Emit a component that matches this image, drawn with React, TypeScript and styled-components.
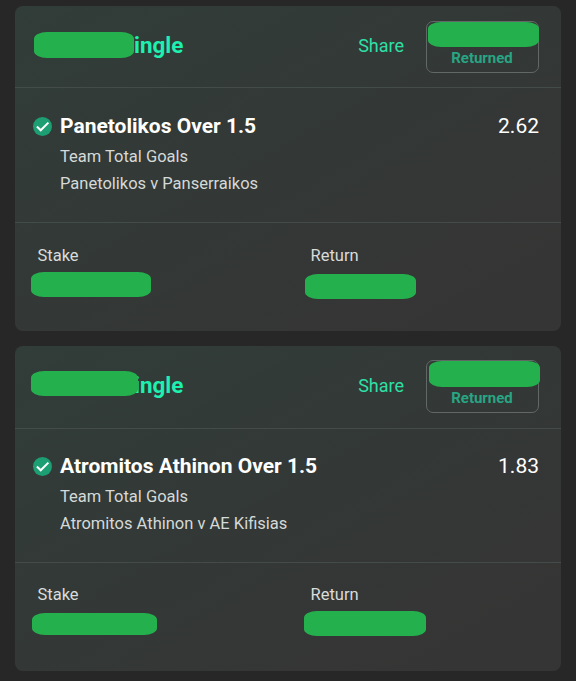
import React from "react";
import styled, { createGlobalStyle } from "styled-components";

const GlobalStyle = createGlobalStyle`
  * { box-sizing: border-box; }
  body {
    margin: 0;
    background: #282727;
    font-family: Roboto, "Liberation Sans", sans-serif;
    color: #fff;
  }
`;

const Page = styled.main`
  display: flex;
  flex-direction: column;
  gap: 15px;
  height: 681px;
  padding: 6px 15px 10px;
  overflow: hidden;
`;

const Card = styled.article`
  width: 546px;
  height: 325px;
  display: flex;
  flex-direction: column;
  border-radius: 8px;
  background: linear-gradient(150deg, #313d39 0%, #333836 50%, #363535 90%);
`;

const Header = styled.header<{ $height: number }>`
  display: flex;
  align-items: flex-start;
  flex: none;
  height: ${(p) => p.$height}px;
  padding: 0 22px 0 19px;
  border-bottom: 1px solid #434c48;
`;

const TitleWrap = styled.div`
  position: relative;
  flex: 1;
  height: 28px;
  margin-top: 25px;
  padding-left: 100px;
`;

const Title = styled.h2`
  margin: 0;
  font-size: 22.4px;
  line-height: 28px;
  font-weight: 700;
  color: #1ef0b0;
`;

const Share = styled.button`
  border: 0;
  padding: 0;
  margin: 28px 22px 0 0;
  background: none;
  font: 400 18px/24px Roboto, sans-serif;
  color: #2ee0a5;
`;

const ReturnedBox = styled.div<{ $top: number }>`
  position: relative;
  display: flex;
  align-items: flex-end;
  justify-content: center;
  width: 113px;
  height: ${(p) => 67 - p.$top}px;
  margin-top: ${(p) => p.$top}px;
  padding: 0 1px 5px 0;
  border: 1px solid #626866;
  border-radius: 7px;
  font-size: 15px;
  line-height: 18px;
  font-weight: 700;
  color: #28a582;
`;

const Selection = styled.section<{ $height: number }>`
  display: grid;
  grid-template-columns: 27px 1fr auto;
  align-content: end;
  flex: none;
  height: ${(p) => p.$height}px;
  padding: 0 22px 25px 18px;
  border-bottom: 1px solid #434c48;
`;

const StatusIcon = styled.svg`
  width: 19px;
  height: 19px;
  margin-top: 5px;
`;

const Pick = styled.h3`
  margin: 0;
  font-size: 21px;
  line-height: 28px;
  font-weight: 700;
`;

const Odds = styled.span`
  font-size: 21px;
  line-height: 28px;
`;

const Detail = styled.p`
  grid-column: 2 / 4;
  margin: 0;
  font-size: 16.5px;
  line-height: 27px;
  color: #d5d9d7;
  &:first-of-type { margin-top: 3px; }
`;

const Totals = styled.footer<{ $top: number }>`
  display: grid;
  grid-template-columns: 273px 1fr;
  padding: ${(p) => p.$top}px 0 0 22.5px;
`;

const Total = styled.div`
  position: relative;
  font-size: 16.5px;
  line-height: 24px;
  color: #d9dcda;
`;

const Redaction = styled.span<{ $x: number; $y: number; $w: number; $h: number }>`
  position: absolute;
  left: ${(p) => p.$x}px;
  top: ${(p) => p.$y}px;
  width: ${(p) => p.$w}px;
  height: ${(p) => p.$h}px;
  border-radius: 13px / 7px;
  background: #24b14d;
`;

type Box = [x: number, y: number, w: number, h: number];
interface Bet {
  pick: string;
  fixture: string;
  odds: string;
  headerHeight: number;
  selectionHeight: number;
  badgeTop: number;
  totalsTop: number;
  masks: { title: Box; returned: Box; stake: Box; total: Box };
}

const bets: Bet[] = [
  {
    pick: "Panetolikos Over 1.5",
    fixture: "Panetolikos v Panserraikos",
    odds: "2.62",
    headerHeight: 82,
    selectionHeight: 135,
    badgeTop: 15,
    totalsTop: 21,
    masks: { title: [0, 1, 100, 26], returned: [1, 0, 111, 25], stake: [-6.5, 28, 120, 25], total: [-5.5, 30, 111, 25] },
  },
  {
    pick: "Atromitos Athinon Over 1.5",
    fixture: "Atromitos Athinon v AE Kifisias",
    odds: "1.83",
    headerHeight: 83,
    selectionHeight: 134,
    badgeTop: 14,
    totalsTop: 20,
    masks: { title: [-3, 0, 107, 25], returned: [2, 0, 111, 26], stake: [-5.5, 30, 125, 22], total: [-6.5, 28, 122, 25] },
  },
];

const Mask = ({ box: [x, y, w, h] }: { box: Box }) => <Redaction $x={x} $y={y} $w={w} $h={h} />;

const BetCard = ({ bet }: { bet: Bet }) => (
  <Card>
    <Header $height={bet.headerHeight}>
      <TitleWrap>
        <Title>ingle</Title>
        <Mask box={bet.masks.title} />
      </TitleWrap>
      <Share>Share</Share>
      <ReturnedBox $top={bet.badgeTop}>
        Returned
        <Mask box={bet.masks.returned} />
      </ReturnedBox>
    </Header>
    <Selection $height={bet.selectionHeight}>
      <StatusIcon viewBox="0 0 19 19" aria-hidden="true">
        <circle cx="9.5" cy="9.5" r="9.5" fill="#1d9e73" />
        <path d="M3.9 9.5 7.7 13.3 15.4 5.6" fill="none" stroke="#fff" strokeWidth="2" />
      </StatusIcon>
      <Pick>{bet.pick}</Pick>
      <Odds>{bet.odds}</Odds>
      <Detail>Team Total Goals</Detail>
      <Detail>{bet.fixture}</Detail>
    </Selection>
    <Totals $top={bet.totalsTop}>
      <Total>
        Stake
        <Mask box={bet.masks.stake} />
      </Total>
      <Total>
        Return
        <Mask box={bet.masks.total} />
      </Total>
    </Totals>
  </Card>
);

export default function App() {
  return (
    <>
      <GlobalStyle />
      <Page>
        {bets.map((bet) => (
          <BetCard key={bet.pick} bet={bet} />
        ))}
      </Page>
    </>
  );
}
